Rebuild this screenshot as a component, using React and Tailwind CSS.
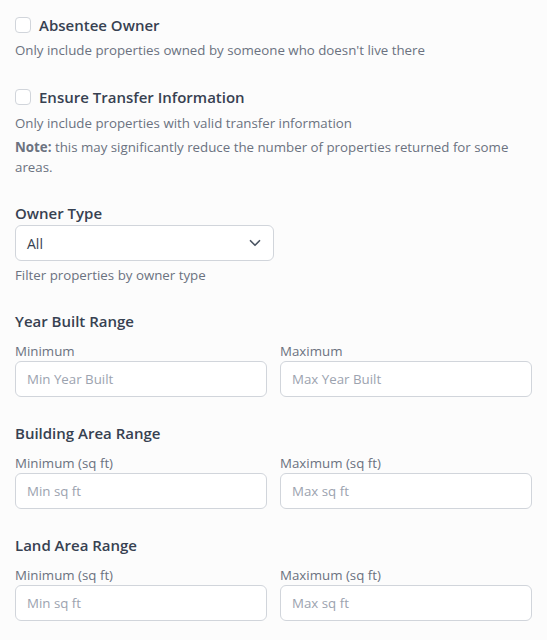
import { ChevronDown } from 'lucide-react'

const ranges = [
  { title: 'Year Built Range', min: 'Minimum', max: 'Maximum', minPh: 'Min Year Built', maxPh: 'Max Year Built' },
  { title: 'Building Area Range', min: 'Minimum (sq ft)', max: 'Maximum (sq ft)', minPh: 'Min sq ft', maxPh: 'Max sq ft' },
  { title: 'Land Area Range', min: 'Minimum (sq ft)', max: 'Maximum (sq ft)', minPh: 'Min sq ft', maxPh: 'Max sq ft' },
]

function CheckRow({ label }) {
  return (
    <label className="flex items-center gap-2 h-[22px]">
      <span className="w-4 h-4 rounded-[4px] border border-[#d1d5db] bg-white shrink-0" />
      <span className="text-[15px] leading-[22px] font-semibold text-[#374151]">{label}</span>
    </label>
  )
}

function Field({ label, placeholder }) {
  return (
    <div className="flex-1 min-w-0">
      <p className="text-[13.3px] leading-[20px] text-[#6b7280]">{label}</p>
      <input
        placeholder={placeholder}
        className="w-full h-[36px] px-[11px] rounded-md border border-[#d1d5db] bg-white text-[13.3px] text-[#374151] placeholder:text-[#9ca3af] outline-none"
      />
    </div>
  )
}

export default function App() {
  return (
    <div className="min-h-screen bg-[#fcfcfc] px-[15px] pt-[14px] font-['Open_Sans',sans-serif]">
      {/* Absentee owner */}
      <div>
        <CheckRow label="Absentee Owner" />
        <p className="mt-1 text-[13.3px] leading-[20px] text-[#6b7280]">
          Only include properties owned by someone who doesn't live there
        </p>
      </div>

      {/* Transfer info */}
      <div className="mt-[26px]">
        <CheckRow label="Ensure Transfer Information" />
        <p className="mt-[5px] text-[13.3px] leading-[20px] text-[#6b7280]">
          Only include properties with valid transfer information
        </p>
        <p className="mt-1 text-[13.3px] leading-[20px] text-[#6b7280]">
          <b className="font-bold">Note:</b> this may significantly reduce the number of properties returned for some areas.
        </p>
      </div>

      {/* Owner type */}
      <div className="mt-[25px]">
        <p className="text-[15px] leading-[22px] font-semibold text-[#374151]">Owner Type</p>
        <div className="mt-px w-[259px] h-[36px] pl-[11px] pr-[9px] flex items-center justify-between rounded-md border border-[#d1d5db] bg-white">
          <span className="text-[14px] text-[#374151]">All</span>
          <ChevronDown size={18} strokeWidth={2.25} className="text-[#4b5563]" />
        </div>
        <p className="mt-1 text-[13.3px] leading-[20px] text-[#6b7280]">Filter properties by owner type</p>
      </div>

      {ranges.map((r) => (
        <div key={r.title} className="mt-[25px]">
          <p className="text-[15px] leading-[22px] font-semibold text-[#374151]">{r.title}</p>
          <div className="mt-[9px] flex gap-[13px]">
            <Field label={r.min} placeholder={r.minPh} />
            <Field label={r.max} placeholder={r.maxPh} />
          </div>
        </div>
      ))}
    </div>
  )
}
